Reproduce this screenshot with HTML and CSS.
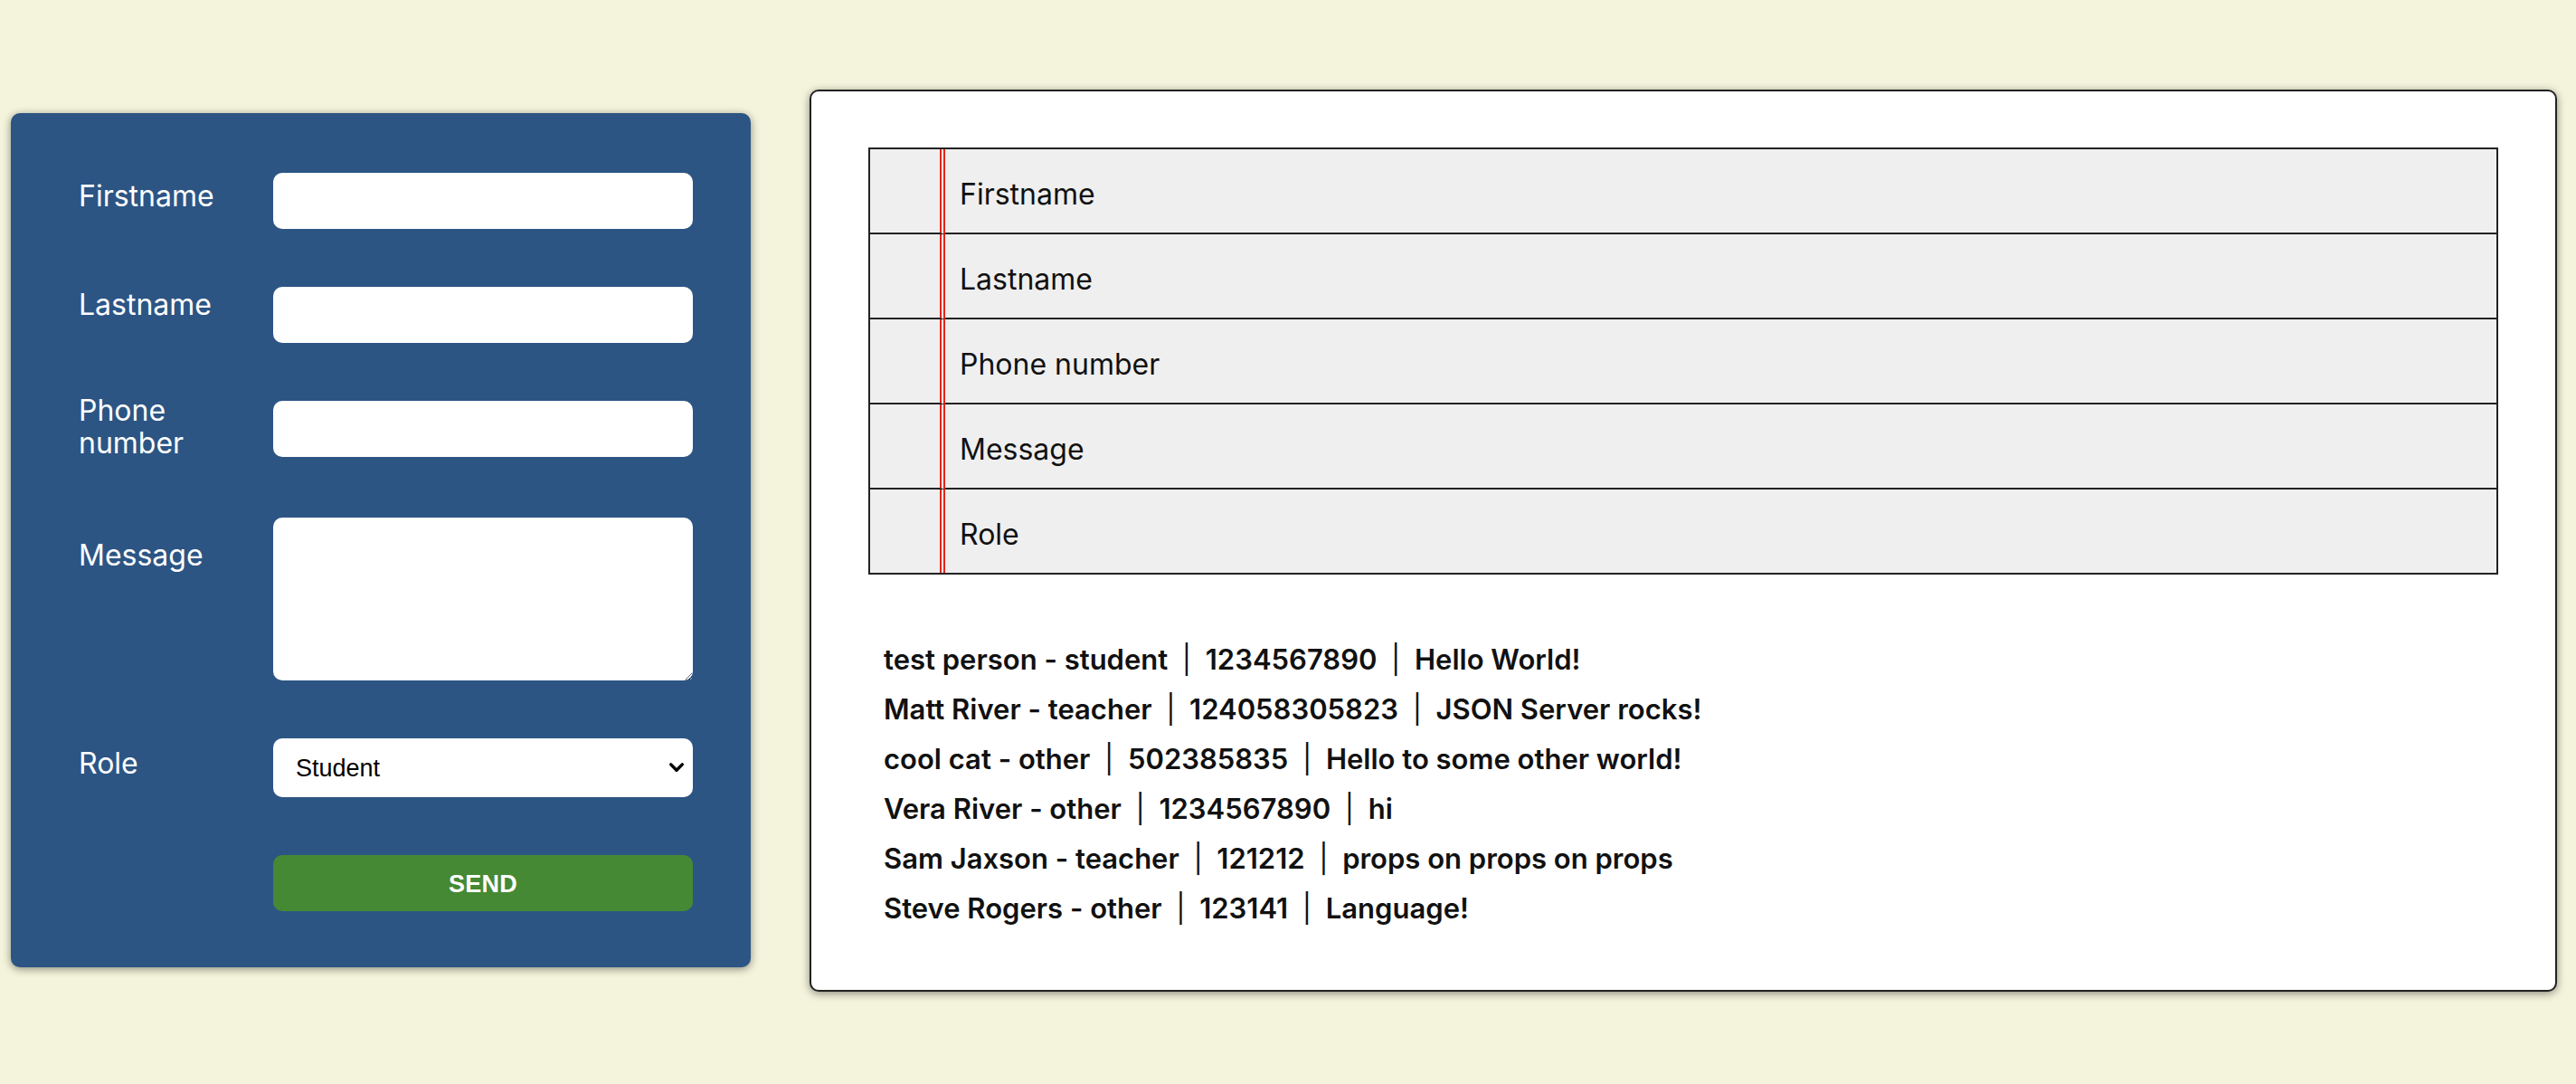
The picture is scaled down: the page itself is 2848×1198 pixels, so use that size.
FILE: index.html
```html
<!DOCTYPE html>
<html lang="en">
<head>
<meta charset="utf-8">
<title>Contacts</title>
<link rel="stylesheet" href="styles.css">
</head>
<body>
<main class="page">
  <form class="form-panel">
    <div class="field">
      <label class="label label-first" for="firstname">Firstname</label>
      <input class="input" id="firstname" type="text">
    </div>
    <div class="field">
      <label class="label label-last" for="lastname">Lastname</label>
      <input class="input" id="lastname" type="text">
    </div>
    <div class="field">
      <label class="label label-phone" for="phone">Phone number</label>
      <input class="input" id="phone" type="text">
    </div>
    <div class="field">
      <label class="label label-message" for="message">Message</label>
      <textarea class="input textarea" id="message"></textarea>
    </div>
    <div class="field">
      <label class="label label-role" for="role">Role</label>
      <div class="select-wrap">
        <select class="input select" id="role">
          <option>Student</option>
          <option>Teacher</option>
          <option>Other</option>
        </select>
        <svg class="chevron" viewBox="0 0 20 14" width="20" height="14" aria-hidden="true">
          <path d="M3 3 L10 10 L17 3" fill="none" stroke="#000" stroke-width="3.8" stroke-linecap="round" stroke-linejoin="round"/>
        </svg>
      </div>
    </div>
    <div class="field">
      <span class="label"></span>
      <button class="send" type="button">SEND</button>
    </div>
  </form>

  <section class="list-panel">
    <table class="preview">
      <tbody>
        <tr><td class="margin-cell"></td><td class="line-cell">Firstname</td></tr>
        <tr><td class="margin-cell"></td><td class="line-cell">Lastname</td></tr>
        <tr><td class="margin-cell"></td><td class="line-cell">Phone number</td></tr>
        <tr><td class="margin-cell"></td><td class="line-cell">Message</td></tr>
        <tr><td class="margin-cell"></td><td class="line-cell">Role</td></tr>
      </tbody>
    </table>
    <ul class="entries">
      <li>test person - student &nbsp;<span class="sep">|</span>&nbsp; 1234567890 &nbsp;<span class="sep">|</span>&nbsp; Hello World!</li>
      <li>Matt River - teacher &nbsp;<span class="sep">|</span>&nbsp; 124058305823 &nbsp;<span class="sep">|</span>&nbsp; JSON Server rocks!</li>
      <li>cool cat - other &nbsp;<span class="sep">|</span>&nbsp; 502385835 &nbsp;<span class="sep">|</span>&nbsp; Hello to some other world!</li>
      <li>Vera River - other &nbsp;<span class="sep">|</span>&nbsp; 1234567890 &nbsp;<span class="sep">|</span>&nbsp; hi</li>
      <li>Sam Jaxson - teacher &nbsp;<span class="sep">|</span>&nbsp; 121212 &nbsp;<span class="sep">|</span>&nbsp; props on props on props</li>
      <li>Steve Rogers - other &nbsp;<span class="sep">|</span>&nbsp; 123141 &nbsp;<span class="sep">|</span>&nbsp; Language!</li>
    </ul>
  </section>
</main>
</body>
</html>
```

FILE: styles.css
```css
* { box-sizing: border-box; }

html, body {
  margin: 0;
  padding: 0;
}

body {
  background: #f4f4dc;
  font-family: Inter, "Noto Sans", sans-serif;
  color: #111;
}

.page {
  min-height: 1194px;
  display: flex;
  align-items: center;
  gap: 65px;
  padding: 0 21px 0 12px;
}

/* ---------- form ---------- */
.form-panel {
  flex: 0 0 818px;
  background: #2c5584;
  border-radius: 10px;
  box-shadow: 0 2px 10px rgba(0, 0, 0, 0.45);
  padding: 66px 64px 62px 64px;
  display: flex;
  flex-direction: column;
  gap: 64px;
}

.field {
  display: flex;
  align-items: flex-start;
}

.label {
  flex: 0 0 226px;
  padding: 0 24px 0 11px;
  color: #fff;
  font-size: 32px;
  line-height: 36px;
}

.label-first { padding-top: 8px; }
.label-last { padding-top: 2px; }
.label-phone { margin: -7px 0 0; }
.label-message { padding-top: 24px; }
.label-role { padding-top: 10px; }

.input {
  flex: 0 0 464px;
  width: 464px;
  height: 62px;
  border: none;
  border-radius: 10px;
  background: #fff;
  font-family: "Liberation Sans", Arial, sans-serif;
  font-size: 27px;
  padding: 0 24px;
  margin: 0;
  outline: none;
}

.textarea {
  height: 180px;
  resize: vertical;
  display: block;
}

.select-wrap {
  position: relative;
  flex: 0 0 464px;
  width: 464px;
}

.select {
  height: 65px;
  display: block;
  -webkit-appearance: none;
  appearance: none;
  color: #000;
  padding-left: 25px;
}

.chevron {
  position: absolute;
  right: 9px;
  top: 26px;
  width: 18px;
  height: 13px;
  pointer-events: none;
}

.send {
  flex: 0 0 464px;
  height: 62px;
  border: none;
  border-radius: 10px;
  background: #468934;
  color: #fff;
  font-family: "Liberation Sans", Arial, sans-serif;
  font-weight: bold;
  font-size: 27px;
  letter-spacing: 0.3px;
  padding: 2px 0 0;
}

/* ---------- list panel ---------- */
.list-panel {
  flex: 1 1 auto;
  background: #fff;
  border: 2px solid #222;
  border-radius: 10px;
  box-shadow: 0 2px 10px rgba(0, 0, 0, 0.45);
  padding: 62px 63px 63px 63px;
}

.preview {
  width: 100%;
  border-collapse: separate;
  border-spacing: 0;
  border: 2px solid #222;
}

.preview td {
  background: #efefef;
  height: 94px;
  border-bottom: 2px solid #222;
  padding: 0;
  font-size: 32px;
  color: #111;
}

.preview tr:last-child td {
  border-bottom: none;
  height: 92px;
}

.margin-cell {
  width: 83px;
  border-right: 6px double #e3261b;
}

.line-cell {
  padding-left: 16px !important;
  padding-top: 7px !important;
}

.entries {
  list-style: none;
  margin: 66px 0 0 0;
  padding: 0 0 0 17px;
}

.entries li {
  font-size: 31px;
  font-weight: 600;
  line-height: 55px;
  color: #111;
  white-space: pre-wrap;
}

.sep {
  font-weight: 400;
}
```
